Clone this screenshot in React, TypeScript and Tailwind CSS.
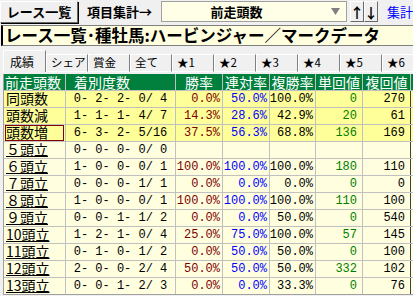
import * as React from 'react'

const jp = "font-['Noto_Sans_CJK_JP',sans-serif]"
const mono = "font-['Liberation_Mono',monospace]"

type Row = {
	label: string
	rec: number[]
	win: string
	ren: string
	fuku: string
	tan: string
	fk: string
	count?: boolean
	hot?: boolean
	sel?: boolean
}

const rows: Row[] = [
	{ label: '同頭数', rec: [0, 2, 2, 0, 4], win: '0.0%', ren: '50.0%', fuku: '100.0%', tan: '0', fk: '270', hot: true },
	{ label: '頭数減', rec: [1, 1, 1, 4, 7], win: '14.3%', ren: '28.6%', fuku: '42.9%', tan: '20', fk: '61', hot: true },
	{ label: '頭数増', rec: [6, 3, 2, 5, 16], win: '37.5%', ren: '56.3%', fuku: '68.8%', tan: '136', fk: '169', hot: true, sel: true },
	{ label: '５頭立', count: true, rec: [0, 0, 0, 0, 0], win: '', ren: '', fuku: '', tan: '', fk: '' },
	{ label: '６頭立', count: true, rec: [1, 0, 0, 0, 1], win: '100.0%', ren: '100.0%', fuku: '100.0%', tan: '180', fk: '110' },
	{ label: '７頭立', count: true, rec: [0, 0, 0, 1, 1], win: '0.0%', ren: '0.0%', fuku: '0.0%', tan: '0', fk: '0' },
	{ label: '８頭立', count: true, rec: [1, 0, 0, 0, 1], win: '100.0%', ren: '100.0%', fuku: '100.0%', tan: '110', fk: '100' },
	{ label: '９頭立', count: true, rec: [0, 0, 1, 1, 2], win: '0.0%', ren: '0.0%', fuku: '50.0%', tan: '0', fk: '540' },
	{ label: '10頭立', count: true, rec: [1, 2, 1, 0, 4], win: '25.0%', ren: '75.0%', fuku: '100.0%', tan: '57', fk: '145' },
	{ label: '11頭立', count: true, rec: [0, 1, 0, 1, 2], win: '0.0%', ren: '50.0%', fuku: '50.0%', tan: '0', fk: '100' },
	{ label: '12頭立', count: true, rec: [2, 0, 0, 2, 4], win: '50.0%', ren: '50.0%', fuku: '50.0%', tan: '332', fk: '102' },
	{ label: '13頭立', count: true, rec: [0, 0, 1, 2, 3], win: '0.0%', ren: '0.0%', fuku: '33.3%', tan: '0', fk: '76' },
]

const tabs = ['成績', 'シェア', '賞金', '全て', '★1', '★2', '★3', '★4', '★5', '★6']
const heads = ['前走頭数', '着別度数', '勝率', '連対率', '複勝率', '単回値', '複回値']

const pad2 = (n: number) => (n < 10 ? ' ' + n : '' + n)
const record = (r: number[]) => `${r[0]}-${pad2(r[1])}-${pad2(r[2])}-${pad2(r[3])}/${pad2(r[4])}`

const grid = 'grid grid-cols-[62px_110px_47px_47px_46px_47px_48px]'
const raised = 'border border-t-white border-l-white border-r-[#696969] border-b-[#696969] bg-[#F0F0F0]'
const cell = 'border-r border-[#C0C0C0] flex items-center leading-none whitespace-pre'
const num = `${cell} justify-end text-[12px] ${mono}`

export default function App() {
	return (
		<div className={`w-[413px] h-[296px] overflow-hidden bg-[#F0F0F0] text-black ${jp}`}>
			{/* top bar */}
			<div className="flex items-center h-[23px]">
				<div className={`${raised} w-[78px] h-[22px] flex items-center justify-center text-[13px] font-bold leading-none shadow-[1px_1px_0_#000]`}>
					レース一覧
				</div>
				<div className="w-[83px] h-[22px] flex items-center justify-center text-[13px] font-bold leading-none">
					項目集計→
				</div>
				<div className="w-[186px] h-[21px] bg-[#FFFFE8] border border-[#A0A0A0] flex items-center">
					<span className="flex-1 text-center text-[13px] font-bold leading-none pr-[20px]">前走頭数</span>
					<svg width="9" height="7" viewBox="0 0 9 7" className="mr-[6px]">
						<path d="M0 0H9L4.5 7Z" fill="#808080" />
					</svg>
				</div>
				<div className="ml-[3px] flex">
					<div className={`${raised} w-[14px] h-[21px] flex items-center justify-center text-[14px] font-bold leading-none`}>↑</div>
					<div className={`${raised} w-[14px] h-[21px] flex items-center justify-center text-[14px] font-bold leading-none`}>↓</div>
				</div>
				<div className="ml-[9px] text-[13px] leading-none text-[#0000FF]">集計</div>
			</div>

			{/* title */}
			<div className="mt-[2px] ml-[1px] h-[21px] bg-[#FFFFE0] border-t border-l-2 border-b border-t-[#808080] border-l-black border-b-[#808080] flex items-center pl-[2px] text-[16.5px] font-bold whitespace-nowrap overflow-hidden leading-none">
				レース一覧･種牡馬:ハービンジャー／マークデータ
			</div>

			{/* tabs */}
			<div className="mt-[4px] flex items-end h-[22px] pl-[3px]">
				{tabs.map((t, i) =>
					i === 0 ? (
						<div key={t} className="w-[43px] h-[22px] border-t border-l border-white border-r border-r-[#808080] bg-[#F0F0F0] pl-[6px] flex items-center text-[12px] leading-none shrink-0">
							{t}
						</div>
					) : (
						<div key={t} className="w-[42px] h-[18px] border-t border-l border-white border-r border-r-[#808080] border-b border-b-white pl-[4px] flex items-center text-[11.5px] leading-none whitespace-nowrap overflow-hidden shrink-0">
							{t}
						</div>
					),
				)}
			</div>

			{/* table */}
			<div className="ml-[3px] mt-[2px] w-[410px] h-[221px] overflow-hidden border-l border-b border-[#A0A0A0] bg-white">
				<div className={`${grid} h-[17px] bg-[#00803C] text-white text-[14px] border-b border-[#C0C0C0]`}>
					{heads.map((h, i) => (
						<div
							key={h}
							className={`${cell} pb-[1px] ${i === 0 ? 'pl-[1px]' : i === 1 ? 'pl-[8px]' : 'justify-center'}`}
						>
							{h}
						</div>
					))}
				</div>
				{rows.map((r, i) => (
					<div
						key={i}
						className={`${grid} h-[17px] border-b border-[#C0C0C0] ${r.hot ? 'bg-[#FFFF99]' : 'bg-[#FFFFE0]'}`}
					>
						<div className="border-r border-[#C0C0C0] pl-[1px] pr-[1px]">
							<div className={`h-[16px] flex items-center pb-[2px] text-[14px] leading-none whitespace-nowrap border ${r.sel ? 'border-[#800000]' : 'border-transparent'} ${r.count ? 'underline' : ''}`}>
								{r.label}
							</div>
						</div>
						<div className={`${cell} justify-center text-[12px] ${mono}`}>{record(r.rec)}</div>
						<div className={`${num} pr-[2px] text-[#800000]`}>{r.win}</div>
						<div className={`${num} pr-[2px] text-[#0000FF]`}>{r.ren}</div>
						<div className={`${num} pr-[2px]`}>{r.fuku}</div>
						<div className={`${num} pr-[5px] text-[#008000]`}>{r.tan}</div>
						<div className={`${num} pr-[5px] border-r-[#404040]`}>{r.fk}</div>
					</div>
				))}
			</div>
		</div>
	)
}
